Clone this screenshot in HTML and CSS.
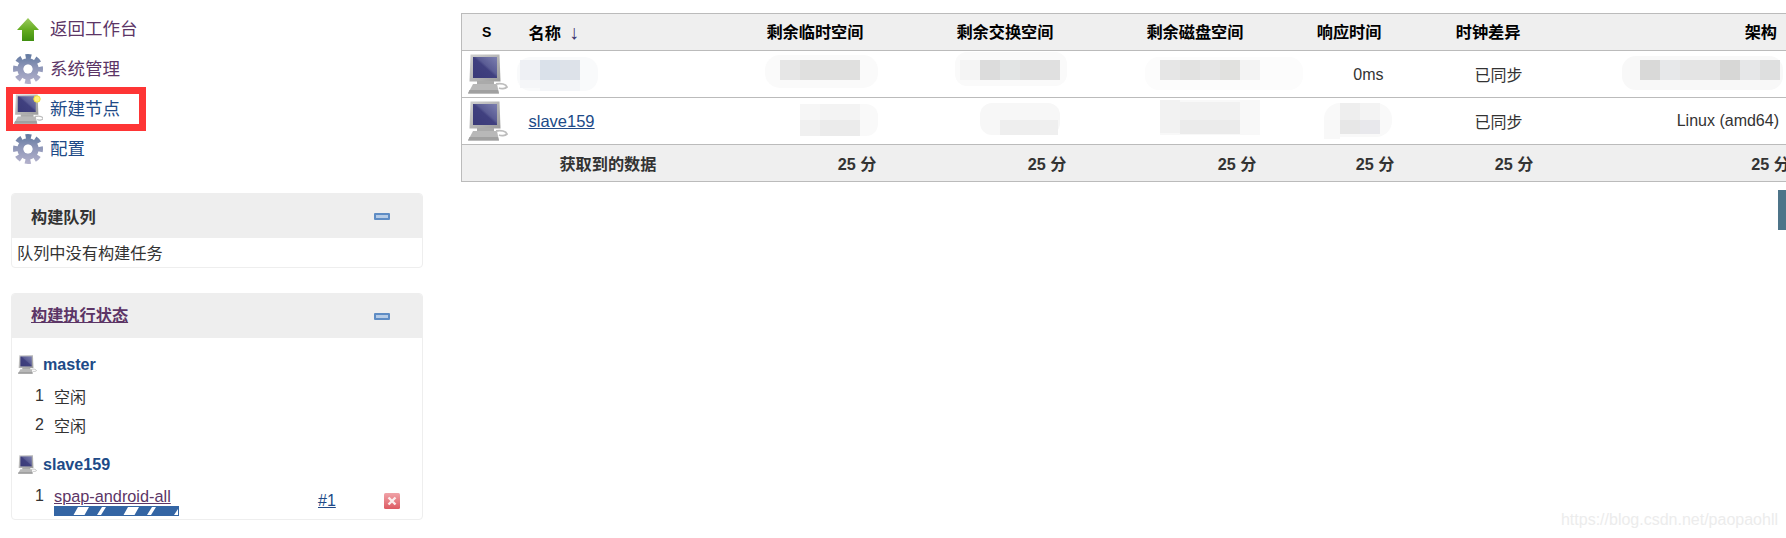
FILE: index.html
```html
<!DOCTYPE html>
<html lang="zh">
<head>
<meta charset="utf-8">
<title>节点列表</title>
<link rel="stylesheet" href="styles.css">
</head>
<body>
<svg class="sprite" width="0" height="0" aria-hidden="true">
  <defs>
    <linearGradient id="gearGrad" gradientUnits="userSpaceOnUse" x1="0" y1="0" x2="0" y2="30">
      <stop offset="0" stop-color="#60789f"/>
      <stop offset="0.45" stop-color="#8e96b8"/>
      <stop offset="1" stop-color="#b4b2cc"/>
    </linearGradient>
    <linearGradient id="arrowGrad" x1="0" y1="0" x2="0" y2="1">
      <stop offset="0" stop-color="#9ccb5e"/>
      <stop offset="0.5" stop-color="#66ad22"/>
      <stop offset="1" stop-color="#3f8f10"/>
    </linearGradient>
    <linearGradient id="screenGrad" x1="1" y1="0" x2="0" y2="1">
      <stop offset="0" stop-color="#7c7fb0"/>
      <stop offset="0.42" stop-color="#5a5c94"/>
      <stop offset="0.5" stop-color="#40407f"/>
      <stop offset="1" stop-color="#3a3a78"/>
    </linearGradient>
    <linearGradient id="caseGrad" x1="0" y1="0" x2="1" y2="1">
      <stop offset="0" stop-color="#cfcfcf"/>
      <stop offset="1" stop-color="#9c9c9c"/>
    </linearGradient>
    <linearGradient id="stopGrad" x1="0" y1="0" x2="0" y2="1">
      <stop offset="0" stop-color="#f0a3a8"/>
      <stop offset="1" stop-color="#dd5a62"/>
    </linearGradient>
    <symbol id="gear" viewBox="0 0 30 30">
      <circle cx="15" cy="15" r="12.5" fill="none" stroke="url(#gearGrad)" stroke-width="5" stroke-dasharray="5.6 4.22" stroke-dashoffset="2.8"/>
      <circle cx="15" cy="15" r="7.5" fill="none" stroke="url(#gearGrad)" stroke-width="6.4"/>
      <circle cx="15" cy="15" r="4.6" fill="#fff"/>
    </symbol>
    <symbol id="computer" viewBox="0 0 40 40">
      <path d="M2.5 0.5 H31.5 L32.5 27.5 L1.5 27.5 Z" fill="url(#caseGrad)"/>
      <rect x="5" y="3" width="24" height="21" fill="url(#screenGrad)"/>
      <path d="M9 27 H26 V31 H9 Z" fill="#aaa"/>
      <path d="M5 30 H29 L31 39.5 H0 Z" fill="#b8b8b8"/>
      <path d="M1.5 36 H30 L31 39.5 H0 Z" fill="#a0a0a0"/>
      <path d="M28 30 C33 29 38 30 39 33 C37 35 33 35 31 34" fill="none" stroke="#bdbdbd" stroke-width="1.8"/>
    </symbol>
  </defs>
</svg>

<div class="page">
  <aside class="sidebar">
    <nav class="tasks">
      <a class="task visited" href="#">
        <svg class="task-icon" viewBox="0 0 30 30"><path d="M15 4 L26 16 H21 V27 H9 V16 H4 Z" fill="url(#arrowGrad)"/></svg>
        <span>返回工作台</span>
      </a>
      <a class="task visited" href="#">
        <svg class="task-icon"><use href="#gear"/></svg>
        <span>系统管理</span>
      </a>
      <a class="task" href="#">
        <svg class="task-icon" viewBox="0 0 30 30">
          <use href="#computer" x="1" y="0" width="30" height="30"/>
          <circle cx="24" cy="5" r="3.2" fill="#fff27a" stroke="#f4e23a" stroke-width="1"/>
        </svg>
        <span>新建节点</span>
      </a>
      <a class="task" href="#">
        <svg class="task-icon"><use href="#gear"/></svg>
        <span>配置</span>
      </a>
    </nav>

    <section class="panel queue">
      <header class="panel-head">
        <span class="panel-title">构建队列</span>
        <span class="collapse"></span>
      </header>
      <div class="queue-body">队列中没有构建任务</div>
    </section>

    <section class="panel executors">
      <header class="panel-head">
        <a class="panel-title panel-link" href="#">构建执行状态</a>
        <span class="collapse"></span>
      </header>
      <div class="exec-body">
        <div class="node-row">
          <svg class="node-icon"><use href="#computer"/></svg>
          <a class="node-name" href="#">master</a>
        </div>
        <div class="exec-row"><span class="exec-num">1</span><span>空闲</span></div>
        <div class="exec-row"><span class="exec-num">2</span><span>空闲</span></div>
        <div class="node-row node-second">
          <svg class="node-icon"><use href="#computer"/></svg>
          <a class="node-name" href="#">slave159</a>
        </div>
        <div class="exec-row exec-busy">
          <span class="exec-num">1</span>
          <div class="job">
            <a class="job-link" href="#">spap-android-all</a>
            <svg class="progress" viewBox="0 0 125 10" width="125" height="10">
              <rect width="125" height="10" fill="#3465a4"/>
              <path d="M19.5 9 L24 1 H35 L30.5 9 Z M43 9 L48 1 H52 L47 9 Z M69.5 9 L74 1 H85 L80.5 9 Z M93 9 L98 1 H102 L97 9 Z M120 9 L124 3 V9 Z" fill="#fff"/>
            </svg>
          </div>
          <a class="build-link" href="#">#1</a>
          <svg class="stop" viewBox="0 0 16 16" width="16" height="16">
            <rect width="16" height="16" rx="1.5" fill="url(#stopGrad)"/>
            <path d="M4.5 4.5 L11.5 11.5 M11.5 4.5 L4.5 11.5" stroke="#fbeeee" stroke-width="2.4"/>
          </svg>
        </div>
      </div>
    </section>
  </aside>

  <main class="main">
    <table class="nodes">
      <colgroup>
        <col class="c-s"><col class="c-name"><col class="c-3"><col class="c-4"><col class="c-5"><col class="c-6"><col class="c-7"><col class="c-8">
      </colgroup>
      <thead>
        <tr>
          <th class="center">S</th>
          <th class="left name-head"><a class="plain" href="#">名称</a><span class="sort">↓</span></th>
          <th>剩余临时空间</th>
          <th>剩余交换空间</th>
          <th>剩余磁盘空间</th>
          <th>响应时间</th>
          <th>时钟差异</th>
          <th>架构</th>
        </tr>
      </thead>
      <tbody>
        <tr>
          <td class="icon-cell"><svg class="node-big"><use href="#computer"/></svg></td>
          <td></td><td></td><td></td><td></td>
          <td class="latency">0ms</td>
          <td>已同步</td>
          <td></td>
        </tr>
        <tr>
          <td class="icon-cell"><svg class="node-big"><use href="#computer"/></svg></td>
          <td class="left"><a class="slave" href="#">slave159</a></td>
          <td></td><td></td><td></td><td></td>
          <td>已同步</td>
          <td>Linux (amd64)</td>
        </tr>
      </tbody>
      <tfoot>
        <tr>
          <td colspan="2">获取到的数据</td>
          <td>25 分</td><td>25 分</td><td>25 分</td><td>25 分</td><td>25 分</td><td>25 分</td>
        </tr>
      </tfoot>
    </table>
  </main>
</div>

<svg class="mosaic" width="1786" height="538" aria-hidden="true">
  <g>
    <rect x="517" y="57" width="81" height="34" rx="14" fill="#f9fafb"/>
    <rect x="520" y="60" width="20" height="20" fill="#eef0f4"/>
    <rect x="520" y="80" width="20" height="8" fill="#f5f6f8"/>
    <rect x="540" y="60" width="20" height="20" fill="#dae1ea"/>
    <rect x="560" y="60" width="20" height="20" fill="#dde2e9"/>
    <rect x="540" y="80" width="40" height="11" fill="#f3f5f8"/>
  </g>
  <g>
    <rect x="765" y="55" width="113" height="33" rx="15" fill="#fafafa"/>
    <rect x="780" y="60" width="20" height="20" fill="#e6e6e6"/>
    <rect x="800" y="60" width="60" height="20" fill="#e0e0df"/>
  </g>
  <g>
    <rect x="800" y="104" width="78" height="32" rx="12" fill="#f9f9f9"/>
    <rect x="800" y="104" width="20" height="32" fill="#f6f6f6"/>
    <rect x="820" y="104" width="40" height="16" fill="#f3f3f3"/>
    <rect x="800" y="120" width="20" height="16" fill="#f0f0f0"/>
    <rect x="820" y="120" width="40" height="16" fill="#ebebeb"/>
  </g>
  <g>
    <rect x="955" y="52" width="112" height="34" rx="12" fill="#fafafa"/>
    <rect x="960" y="60" width="20" height="20" fill="#f4f4f4"/>
    <rect x="980" y="60" width="20" height="20" fill="#dcdcdc"/>
    <rect x="1000" y="60" width="20" height="20" fill="#e2e4e4"/>
    <rect x="1020" y="60" width="40" height="20" fill="#e0e0e0"/>
  </g>
  <g>
    <rect x="980" y="103" width="80" height="32" rx="12" fill="#f7f7f7"/>
    <rect x="1000" y="120" width="40" height="15" fill="#eeeeee"/>
    <rect x="1040" y="120" width="18" height="15" fill="#efefef"/>
  </g>
  <g>
    <rect x="1145" y="57" width="158" height="33" rx="14" fill="#fcfcfc"/>
    <rect x="1160" y="60" width="20" height="20" fill="#e6e6e6"/>
    <rect x="1180" y="60" width="20" height="20" fill="#e2e2e1"/>
    <rect x="1200" y="60" width="20" height="20" fill="#e5e5e5"/>
    <rect x="1220" y="60" width="20" height="20" fill="#e1e1df"/>
    <rect x="1240" y="60" width="20" height="20" fill="#f3f3f3"/>
  </g>
  <g>
    <rect x="1160" y="100" width="100" height="35" fill="#f8f8f8"/>
    <rect x="1160" y="100" width="20" height="33" fill="#f2f2f2"/>
    <rect x="1180" y="102" width="60" height="18" fill="#f1f1f1"/>
    <rect x="1180" y="120" width="60" height="14" fill="#ebebeb"/>
  </g>
  <g>
    <rect x="1324" y="103" width="68" height="34" rx="16" fill="#f9f9f9"/>
    <rect x="1324" y="120" width="16" height="19" fill="#f8f8f8"/>
    <rect x="1340" y="103" width="20" height="17" fill="#eeeeee"/>
    <rect x="1360" y="103" width="20" height="17" fill="#f3f3f3"/>
    <rect x="1340" y="120" width="20" height="14" fill="#e7e7e7"/>
    <rect x="1360" y="120" width="20" height="14" fill="#e8e8ec"/>
  </g>
  <g>
    <rect x="1622" y="56" width="161" height="34" rx="14" fill="#f8f8f8"/>
    <rect x="1640" y="60" width="20" height="20" fill="#d9d9d8"/>
    <rect x="1660" y="60" width="20" height="20" fill="#e7e8ea"/>
    <rect x="1680" y="60" width="40" height="20" fill="#e4e4e4"/>
    <rect x="1720" y="60" width="20" height="20" fill="#d7d7d6"/>
    <rect x="1740" y="60" width="20" height="20" fill="#e6e7e8"/>
    <rect x="1760" y="60" width="20" height="20" fill="#dedfdf"/>
  </g>
</svg>

<div class="red-box"></div>
<div class="side-tab"></div>
<div class="watermark">https://blog.csdn.net/paopaohll</div>
</body>
</html>
```

FILE: styles.css
```css
* {
  box-sizing: border-box;
}

html,
body {
  margin: 0;
  width: 1786px;
  height: 538px;
  overflow: hidden;
  background: #fff;
}

body {
  position: relative;
  font-family: "Liberation Sans", "Noto Sans CJK SC", sans-serif;
  font-size: 16px;
  color: #333;
}

.sprite {
  display: block;
  height: 0;
  width: 0;
}

.page {
  display: flex;
  align-items: flex-start;
}

.sidebar {
  flex: 0 0 461px;
  padding-top: 9px;
  padding-left: 11px;
  padding-right: 38px;
}

.tasks {
  display: flex;
  flex-direction: column;
  margin-bottom: 24px;
}

.task {
  display: flex;
  align-items: center;
  height: 40px;
  padding-left: 2px;
  gap: 7px;
  font-size: 17.5px;
  color: #204a87;
  text-decoration: none;
}

.task span {
  padding-bottom: 4px;
}

.task.visited {
  color: #5c3566;
}

.task-icon {
  width: 30px;
  height: 30px;
  flex: none;
  filter: blur(0.4px);
}

.panel {
  border: 1px solid #eee;
  border-radius: 4px;
  overflow: hidden;
}

.panel-head {
  display: flex;
  align-items: center;
  justify-content: space-between;
  height: 44px;
  padding: 0 32px 0 19px;
  background: #eee;
}

.panel-title {
  font-size: 16.2px;
  font-weight: bold;
  color: #333;
}

.panel-link {
  padding-bottom: 4px;
  color: #5c3566;
  text-decoration: underline;
}

.collapse {
  display: block;
  width: 16px;
  height: 7px;
  border: 2px solid #5e8cc4;
  border-radius: 1px;
  background: #b5cbe6;
}

.queue {
  height: 75px;
  margin-bottom: 25px;
}

.queue-body {
  padding: 5px 0 0 5px;
  font-size: 16.2px;
  line-height: 20px;
}

.executors {
  height: 227px;
}

.exec-body {
  padding-top: 11px;
  padding-left: 6px;
}

.node-row {
  display: flex;
  align-items: center;
  gap: 6px;
  height: 30px;
}

.node-second {
  margin-top: 10px;
}

.node-icon {
  width: 19px;
  height: 19px;
  flex: none;
  filter: blur(0.3px);
}

.node-name {
  font-weight: bold;
  font-size: 16.1px;
  color: #204a87;
  text-decoration: none;
}

.exec-row {
  display: flex;
  align-items: center;
  height: 29px;
  padding-left: 14px;
}

.exec-row:nth-child(2) {
  margin-top: 2px;
}

.exec-num {
  width: 12px;
  margin-right: 10px;
  text-align: right;
}

.exec-busy {
  height: 39px;
  padding-top: 2px;
  align-items: flex-start;
}

.exec-busy .exec-num {
  line-height: 30px;
}

.job {
  flex: 0 0 264px;
  display: flex;
  flex-direction: column;
}

.job-link {
  font-size: 16.3px;
  line-height: 30px;
  height: 25px;
  color: #5c3566;
  text-decoration: underline;
}

.progress {
  display: block;
}

.build-link {
  width: 66px;
  margin-top: 9px;
  line-height: 22px;
  color: #204a87;
  text-decoration: underline;
}

.stop {
  margin-top: 12px;
  flex: none;
  filter: blur(0.5px);
}

.main {
  flex: none;
  padding-top: 13px;
}

.nodes {
  width: 1332px;
  table-layout: fixed;
  border-collapse: collapse;
  border: 1px solid #bbb;
}

.c-s { width: 50px; }
.c-name { width: 148px; }
.c-3 { width: 220px; }
.c-4 { width: 190px; }
.c-5 { width: 190px; }
.c-6 { width: 138px; }
.c-7 { width: 139px; }
.c-8 { width: 257px; }

.nodes th {
  height: 37px;
  padding: 0 16px 0 0;
  background: #efefef;
  border-bottom: 1px solid #bbb;
  font-size: 16.2px;
  line-height: 20px;
  font-weight: bold;
  color: #000;
  text-align: right;
}

.nodes th.center {
  padding: 0;
  font-size: 14px;
  text-align: center;
}

.nodes th.left,
.nodes td.left {
  padding: 0 0 0 17px;
  text-align: left;
}

.plain {
  color: #000;
  text-decoration: none;
}

.sort {
  margin-left: 8px;
  font-size: 20px;
  font-weight: normal;
  color: #3c3570;
}

.nodes tbody td {
  height: 47px;
  padding: 0 14px 0 0;
  border-bottom: 1px solid #bbb;
  text-align: right;
  vertical-align: middle;
}

.nodes tbody td.latency {
  padding-top: 2px;
}

.nodes tbody td.icon-cell {
  padding: 0 0 0 6px;
  text-align: left;
}

.node-big {
  display: block;
  width: 40px;
  height: 40px;
  filter: blur(0.4px);
}

.slave {
  font-size: 16.5px;
  color: #204a87;
  text-decoration: underline;
}

.nodes tfoot td {
  height: 37px;
  padding: 0 3px 0 0;
  background: #efefef;
  font-size: 16.2px;
  font-weight: bold;
  text-align: right;
}

.mosaic {
  position: absolute;
  left: 0;
  top: 0;
  pointer-events: none;
}

.red-box {
  position: absolute;
  left: 6px;
  top: 87px;
  width: 140px;
  height: 44px;
  border: 7px solid #fe3535;
}

.side-tab {
  position: absolute;
  left: 1778px;
  top: 190px;
  width: 8px;
  height: 40px;
  background: #4d7489;
}

.watermark {
  position: absolute;
  right: 8px;
  top: 511px;
  font-size: 16px;
  line-height: 18px;
  color: #ececec;
}
```
